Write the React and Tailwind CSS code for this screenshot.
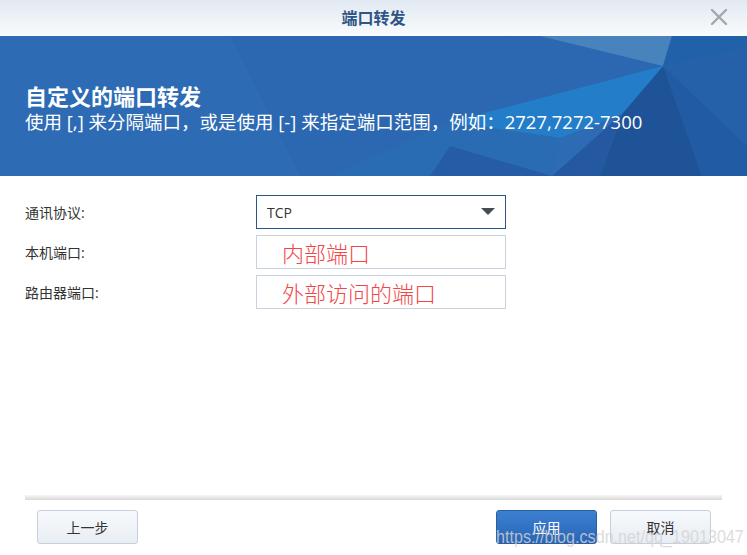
import React from "react";

const FONT = { fontFamily: '"Open Sans", "Noto Sans CJK SC", sans-serif' };

function BannerBg() {
  return (
    <svg className="absolute inset-0 w-full h-full" viewBox="0 0 747 140" preserveAspectRatio="none">
      <rect x="0" y="0" width="747" height="140" fill="#2d6bb4" />
      <polygon points="230,0 540,0 663,30 450,86 330,140 300,140" fill="#2c68b1" />
      <polygon points="540,0 672,0 663,30" fill="#4883bd" />
      <polygon points="672,0 747,0 747,12 663,30" fill="#2161aa" />
      <polygon points="663,30 747,12 747,110" fill="#2461a9" />
      <polygon points="663,30 747,110 747,140 702,140" fill="#215ba3" />
      <polygon points="663,30 702,140 600,140 622,78" fill="#1e5397" />
      <polygon points="622,78 600,140 552,140" fill="#2459a1" />
      <polygon points="450,86 663,30 622,78 560,102" fill="#237dc8" />
      <polygon points="450,86 560,102 552,140 330,140" fill="#2a6cb4" />
      <polygon points="450,110 552,140 430,140" fill="#2459a1" opacity="0.8" />
    </svg>
  );
}

function Field({ children }) {
  return (
    <div className="h-[34px] w-[250px] border border-[#c9d3df] bg-white flex items-center pl-[25px]">
      {children}
    </div>
  );
}

export default function App() {
  return (
    <div className="w-[747px] h-[555px] bg-white flex flex-col relative overflow-hidden" style={FONT}>
      {/* title bar */}
      <div className="h-[36px] shrink-0 relative flex items-center justify-center bg-gradient-to-b from-[#e2e9f2] to-[#f9fbfd]">
        <span className="text-[16px] font-bold text-[#2f5585] leading-none">端口转发</span>
        <svg className="absolute right-[19px] top-[8px]" width="18" height="18" viewBox="0 0 18 18">
          <path d="M2 2 L16 16 M16 2 L2 16" stroke="#a3a7ab" strokeWidth="2.4" strokeLinecap="round" />
        </svg>
      </div>

      {/* banner */}
      <div className="h-[140px] shrink-0 relative text-white">
        <BannerBg />
        <div className="relative pl-[25px] pt-[46px]">
          <div className="text-[22px] font-bold leading-[28px]">自定义的端口转发</div>
          <div className="mt-[1px] text-[18.5px] leading-[22px] whitespace-nowrap">使用 [,] 来分隔端口，或是使用 [-] 来指定端口范围，例如：2727,7272-7300</div>
        </div>
      </div>

      {/* form */}
      <div className="px-[25px] pt-[19px] flex flex-col gap-[6px] text-[14px] text-[#333]">
        <div className="flex items-center">
          <div className="w-[231px]">通讯协议:</div>
          <div className="h-[34px] w-[250px] border border-[#2b5689] bg-white flex items-center justify-between pl-[10px] pr-[10px]">
            <span className="text-[14px] text-[#333]">TCP</span>
            <svg width="14" height="8" viewBox="0 0 14 8">
              <polygon points="0,0 14,0 7,7" fill="#474c52" />
            </svg>
          </div>
        </div>
        <div className="flex items-center">
          <div className="w-[231px]">本机端口:</div>
          <Field>
            <span className="text-[22px] text-[#f24545] font-light leading-none" style={{ fontFamily: '"Noto Sans CJK SC", sans-serif' }}>内部端口</span>
          </Field>
        </div>
        <div className="flex items-center">
          <div className="w-[231px]">路由器端口:</div>
          <Field>
            <span className="text-[22px] text-[#f24545] font-light leading-none" style={{ fontFamily: '"Noto Sans CJK SC", sans-serif' }}>外部访问的端口</span>
          </Field>
        </div>
      </div>

      <div className="flex-1" />

      {/* footer */}
      <div className="mx-[25px] h-[5px] bg-gradient-to-b from-[#f6f6f6] to-[#d9d9d9]" />
      <div className="mt-[10px] mb-[11px] pl-[37px] pr-[36px] flex items-center">
        <button className="w-[101px] h-[34px] rounded-[3px] border border-[#c5d0dc] bg-gradient-to-b from-[#f6f9fc] to-[#e9eef4] text-[14px] text-[#333]">
          上一步
        </button>
        <div className="flex-1" />
        <button className="w-[101px] h-[34px] rounded-[3px] border border-[#2a5e9f] bg-gradient-to-b from-[#3c80d1] to-[#2865b6] text-[14px] text-white">
          应用
        </button>
        <button className="ml-[13px] w-[101px] h-[34px] rounded-[3px] border border-[#c5d0dc] bg-gradient-to-b from-[#f6f9fc] to-[#e9eef4] text-[14px] text-[#333]">
          取消
        </button>
      </div>

      {/* watermark */}
      <div
        className="absolute left-[496px] top-[526px] text-[19px] leading-[22px] text-[#d4d4d4] whitespace-nowrap pointer-events-none opacity-80 origin-left scale-x-[0.85]"
        style={{ fontFamily: '"Liberation Sans", sans-serif' }}
      >
        https://blog.csdn.net/qq_19013047
      </div>
    </div>
  );
}
